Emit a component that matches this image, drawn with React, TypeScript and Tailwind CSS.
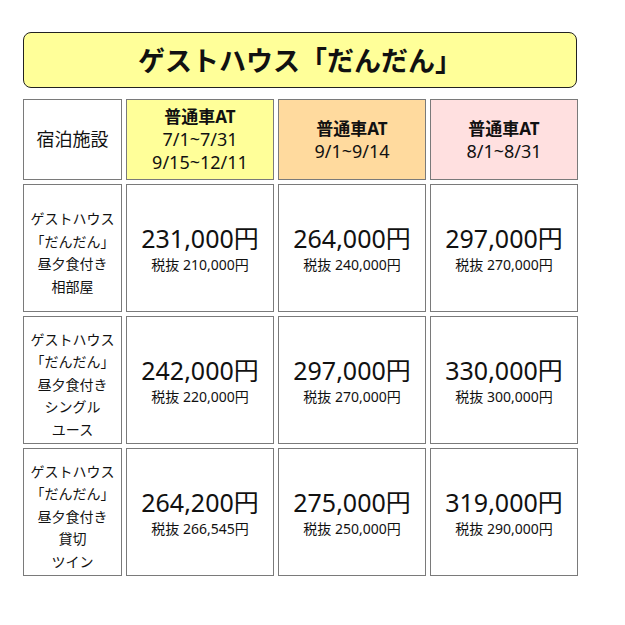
const font = { fontFamily: '"Noto Sans", "Noto Sans CJK JP", sans-serif' };

type Price = { total: string; net: string };

const rows: { label: string[]; prices: Price[] }[] = [
  {
    label: ['ゲストハウス', '「だんだん」', '昼夕食付き', '相部屋'],
    prices: [
      { total: '231,000円', net: '税抜 210,000円' },
      { total: '264,000円', net: '税抜 240,000円' },
      { total: '297,000円', net: '税抜 270,000円' },
    ],
  },
  {
    label: ['ゲストハウス', '「だんだん」', '昼夕食付き', 'シングル', 'ユース'],
    prices: [
      { total: '242,000円', net: '税抜 220,000円' },
      { total: '297,000円', net: '税抜 270,000円' },
      { total: '330,000円', net: '税抜 300,000円' },
    ],
  },
  {
    label: ['ゲストハウス', '「だんだん」', '昼夕食付き', '貸切', 'ツイン'],
    prices: [
      { total: '264,200円', net: '税抜 266,545円' },
      { total: '275,000円', net: '税抜 250,000円' },
      { total: '319,000円', net: '税抜 290,000円' },
    ],
  },
];

const cell = 'flex flex-col items-center justify-center border border-[#7a7a7a] text-center text-[#111]';

export default function App() {
  return (
    <div className="min-h-[625px] w-[625px] bg-white pl-[23px] pt-[32px]" style={font}>
      <div className="flex h-[56px] w-[554px] items-center justify-center rounded-[8px] border-[1.5px] border-[#222] bg-[#ffff99]">
        <h1 className="text-[27px] font-bold leading-none text-[#111]">ゲストハウス「だんだん」</h1>
      </div>

      <div className="mt-[11px] grid w-[555px] grid-cols-[99px_148px_148px_148px] grid-rows-[81px_128px_128px_128px] gap-[4px]">
        <div className={`${cell} bg-white text-[18px]`}>宿泊施設</div>
        <div className={`${cell} bg-[#ffff99] text-[17px] leading-[23px]`}>
          <div className="font-bold">普通車AT</div>
          <div className="text-[18px]">7/1~7/31</div>
          <div className="text-[18px]">9/15~12/11</div>
        </div>
        <div className={`${cell} bg-[#ffda9e] text-[17px] leading-[23px]`}>
          <div className="font-bold">普通車AT</div>
          <div className="text-[18px]">9/1~9/14</div>
        </div>
        <div className={`${cell} bg-[#ffe0e0] text-[17px] leading-[23px]`}>
          <div className="font-bold">普通車AT</div>
          <div className="text-[18px]">8/1~8/31</div>
        </div>

        {rows.map((row, i) => (
          <div key={i} className="contents">
            <div className={`${cell} bg-white pt-[10px] text-[14px] leading-[22.5px]`}>
              {row.label.map((l) => (
                <div key={l}>{l}</div>
              ))}
            </div>
            {row.prices.map((p) => (
              <div key={p.total} className={`${cell} bg-white`}>
                <div className="text-[25px] leading-[34px]">{p.total}</div>
                <div className="text-[14px] leading-[20px]">{p.net}</div>
              </div>
            ))}
          </div>
        ))}
      </div>
    </div>
  );
}
